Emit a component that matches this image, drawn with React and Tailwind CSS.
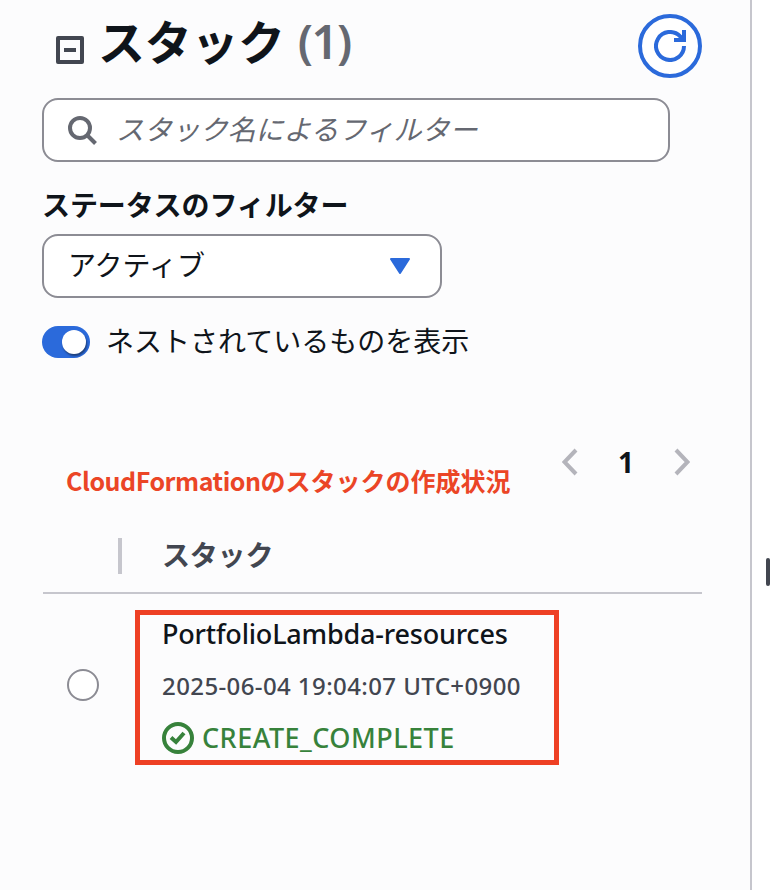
const jp = "font-['Noto_Sans_CJK_JP',sans-serif]";
const latin = "font-['Noto_Sans','Noto_Sans_CJK_JP',sans-serif]";

function Header() {
  return (
    <header className="flex h-[98px] items-start pl-[56px]">
      <svg className="mt-[36px] shrink-0" width="28" height="28" viewBox="0 0 28 28" fill="none" stroke="#424650" strokeWidth="4" strokeLinejoin="round">
        <path d="M2 2h24v24H2zM8 14h12" />
      </svg>
      <h1 className="ml-[14px] mt-[4px] flex h-[72px] items-center whitespace-nowrap text-[47px] font-bold leading-[72px] text-[#0f141a]">
        <span className={`tracking-[-0.3px] ${jp}`}>スタック</span>
        <span className={`ml-[13px] text-[#656871] font-semibold tracking-[-1.5px] ${latin} mt-[2px] text-[47px]`}>(1)</span>
      </h1>
      <button aria-label="更新" className="ml-auto mr-[48px] mt-[14px] flex size-[64px] items-center justify-center rounded-full border-4 border-[#2b6adb] bg-white">
        <svg width="32" height="32" viewBox="0 0 32 32" fill="none" stroke="#2b6adb" strokeWidth="4">
          <path d="M30 16A14 14 0 1 1 26 6.2L29 9" />
          <path d="M30 0v10H20" />
        </svg>
      </button>
    </header>
  );
}

function Filters() {
  return (
    <section className={`flex flex-col items-start pl-[42px] text-[28px] text-[#0f141a] ${jp}`}>
      <div className="flex h-[64px] w-[628px] items-center rounded-2xl border-2 border-[#8c8c94] bg-white pl-[24px]">
        <svg className="mt-px" width="30" height="30" viewBox="0 0 30 30" fill="none" stroke="#656871" strokeWidth="4">
          <circle cx="12" cy="12" r="10" />
          <path d="M19 19l8.5 8.5" />
        </svg>
        <span className="mb-[3px] ml-[18px] whitespace-nowrap italic leading-[57px] tracking-[-0.1px] text-[#656871]">スタック名によるフィルター</span>
      </div>
      <label className="mt-[22px] h-[40px] whitespace-nowrap font-bold leading-[40px] tracking-[-0.1px]">ステータスのフィルター</label>
      <div className="mt-[10px] flex h-[64px] w-[400px] items-center justify-between rounded-2xl border-2 border-[#8c8c94] bg-white pl-[24px] pr-[30px]">
        <span className="mb-[4px] leading-[56px]">アクティブ</span>
        <svg width="20" height="16" viewBox="0 0 20 16" fill="#2b6adb" stroke="#2b6adb" strokeWidth="2" strokeLinejoin="round">
          <path d="M1 1h18l-9 14z" />
        </svg>
      </div>
      <div className="mt-[22px] flex h-[44px] items-center">
        <div className="flex h-[32px] w-[48px] items-center justify-end rounded-full bg-[#2b6adb] pr-[4px]">
          <div className="size-[24px] rounded-full bg-white shadow-[1px_2px_2px_rgba(15,20,26,0.5)]" />
        </div>
        <span className="mb-[4px] ml-[16px] whitespace-nowrap leading-[40px]">ネストされているものを表示</span>
      </div>
    </section>
  );
}

function Pagination() {
  return (
    <nav className="mt-[78px] flex h-[40px] items-center justify-end pr-[60px]">
      <svg width="16" height="28" viewBox="0 0 16 28" fill="none" stroke="#b4b4bb" strokeWidth="4">
        <path d="M14 2L2.5 14 14 26" />
      </svg>
      <span className={`w-[96px] text-center text-[28px] font-bold text-[#0f141a] ${latin}`}>1</span>
      <svg width="16" height="28" viewBox="0 0 16 28" fill="none" stroke="#b4b4bb" strokeWidth="4">
        <path d="M2 2l11.5 12L2 26" />
      </svg>
    </nav>
  );
}

function StackTable() {
  return (
    <section className="pl-[43px] pr-[48px] pt-[38px]">
      <div className="flex h-[74px] items-center border-b-2 border-[#c6c6cd]">
        <div className="ml-[75px] h-[36px] w-[4px] bg-[#c6c6cd]" />
        <span className={`mb-[4px] ml-[40px] text-[28px] font-bold leading-[40px] tracking-[-0.2px] text-[#424650] ${jp}`}>スタック</span>
      </div>
      <div className="flex h-[182px] items-center pl-[24px]">
        <div className="size-[32px] shrink-0 rounded-full border-2 border-[#8c8c94] bg-white" />
        <div className={`ml-[63px] flex flex-col whitespace-nowrap pt-[2px] ${latin}`}>
          <span className="h-[52px] text-[27px] font-medium leading-[52px] tracking-[-0.2px] text-[#0f141a]">PortfolioLambda-resources</span>
          <span className="h-[52px] text-[24px] font-medium leading-[52px] tracking-[0.4px] text-[#424650]">2025-06-04 19:04:07 UTC+0900</span>
          <span className="flex h-[52px] items-center text-[27px] font-medium leading-[52px] tracking-[0.47px] text-[#37823b]">
            <svg className="mr-[8px]" width="32" height="32" viewBox="0 0 32 32" fill="none" stroke="#37823b" strokeWidth="4">
              <circle cx="16" cy="16" r="14" />
              <path d="M9 15.5l5 4.5 8-9" />
            </svg>
            CREATE_COMPLETE
          </span>
        </div>
      </div>
    </section>
  );
}

export default function App() {
  return (
    <main className="relative h-[890px] w-[782px] overflow-hidden bg-white">
      <div className="flex h-full items-start">
        <div className="h-full w-[752px] border-r-2 border-[#c6c6cd] bg-[#fcfcfd]">
          <Header />
          <Filters />
          <Pagination />
          <StackTable />
        </div>
        <div className="ml-[14px] mt-[558px] h-[28px] w-[4px] rounded-sm bg-[#424650]" />
      </div>
      <p className={`absolute left-[66px] top-[462px] whitespace-nowrap text-[25px] font-bold leading-[36px] text-[#eb4526] ${jp}`}>
        <span className="tracking-[-0.45px]">CloudFormation</span>のスタックの作成状況
      </p>
      <div className="absolute left-[135px] top-[610px] h-[155px] w-[424px] border-[5px] border-[#ee4024]" />
    </main>
  );
}
